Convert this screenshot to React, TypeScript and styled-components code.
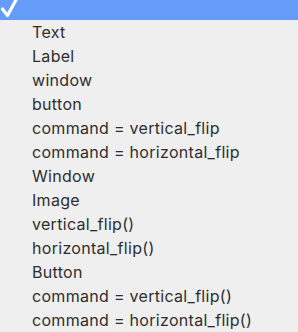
import React from "react";
import styled, { createGlobalStyle } from "styled-components";

const Global = createGlobalStyle`
  html, body { margin: 0; padding: 0; background: #efefef; }
  body { font-family: Inter, "Liberation Sans", Arial, sans-serif; }
`;

const Menu = styled.div`
  width: 298px;
  height: 332px;
  background: #efefef;
  overflow: hidden;
  display: flex;
  flex-direction: column;
`;

const Selected = styled.div`
  height: 20px;
  background: #649cf8;
  display: flex;
  align-items: flex-start;
  flex-shrink: 0;
`;

const Check = styled.svg`
  display: block;
  width: 20px;
  height: 20px;
`;

const List = styled.ul`
  list-style: none;
  margin: 0;
  padding: 0 0 0 32px;
  display: flex;
  flex-direction: column;
`;

const Item = styled.li`
  height: 24px;
  line-height: 24px;
  font-size: 16px;
  letter-spacing: 0.3px;
  color: #2e2e2e;
  white-space: nowrap;
`;

const items = [
  "Text",
  "Label",
  "window",
  "button",
  "command = vertical_flip",
  "command = horizontal_flip",
  "Window",
  "Image",
  "vertical_flip()",
  "horizontal_flip()",
  "Button",
  "command = vertical_flip()",
  "command = horizontal_flip()",
];

export default function App() {
  return (
    <Menu>
      <Global />
      <Selected>
        <Check viewBox="0 0 20 20">
          <path d="M2.5 9 L7.5 15.5 L16.5 -1" fill="none" stroke="#fff" strokeWidth="3.2" strokeLinecap="round" strokeLinejoin="round" />
        </Check>
      </Selected>
      <List>
        {items.map((t, i) => (
          <Item key={i}>{t}</Item>
        ))}
      </List>
    </Menu>
  );
}
